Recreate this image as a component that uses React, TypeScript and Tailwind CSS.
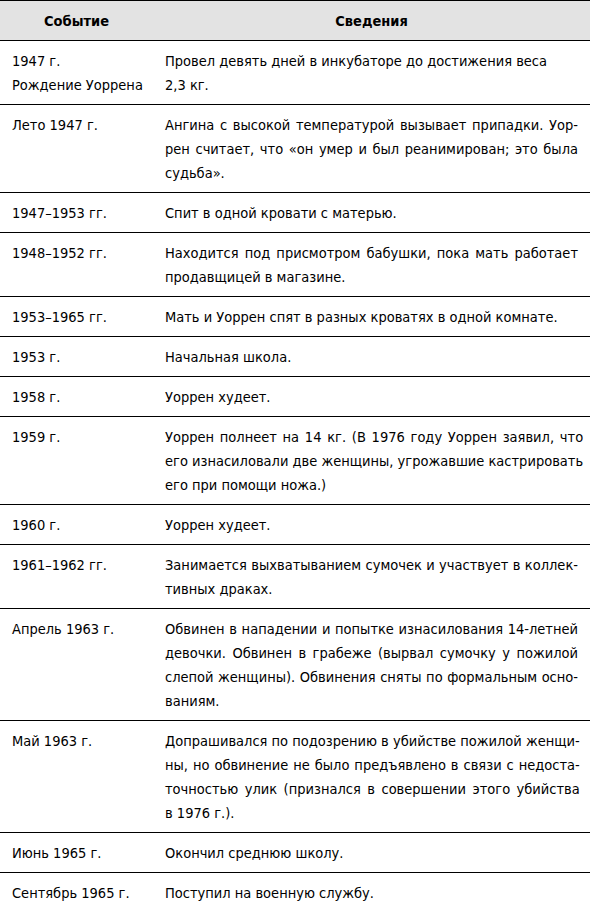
// Each info entry is split into the printed lines of the reference,
// every line but the last is justified to the full column width.
const rows: { event: string[]; info: string[]; ragged?: boolean }[] = [
  {
    event: ["1947 г.", "Рождение Уоррена"],
    info: ["Провел девять дней в инкубаторе до достижения веса", "2,3 кг."],
    ragged: true,
  },
  {
    event: ["Лето 1947 г."],
    info: [
      "Ангина с высокой температурой вызывает припадки. Уор-",
      "рен считает, что «он умер и был реанимирован; это была",
      "судьба».",
    ],
  },
  { event: ["1947–1953 гг."], info: ["Спит в одной кровати с матерью."] },
  {
    event: ["1948–1952 гг."],
    info: ["Находится под присмотром бабушки, пока мать работает", "продавщицей в магазине."],
  },
  { event: ["1953–1965 гг."], info: ["Мать и Уоррен спят в разных кроватях в одной комнате."] },
  { event: ["1953 г."], info: ["Начальная школа."] },
  { event: ["1958 г."], info: ["Уоррен худеет."] },
  {
    event: ["1959 г."],
    info: [
      "Уоррен полнеет на 14 кг. (В 1976 году Уоррен заявил, что",
      "его изнасиловали две женщины, угрожавшие кастрировать",
      "его при помощи ножа.)",
    ],
  },
  { event: ["1960 г."], info: ["Уоррен худеет."] },
  {
    event: ["1961–1962 гг."],
    info: ["Занимается выхватыванием сумочек и участвует в коллек-", "тивных драках."],
  },
  {
    event: ["Апрель 1963 г."],
    info: [
      "Обвинен в нападении и попытке изнасилования 14-летней",
      "девочки. Обвинен в грабеже (вырвал сумочку у пожилой",
      "слепой женщины). Обвинения сняты по формальным осно-",
      "ваниям.",
    ],
  },
  {
    event: ["Май 1963 г."],
    info: [
      "Допрашивался по подозрению в убийстве пожилой женщи-",
      "ны, но обвинение не было предъявлено в связи с недоста-",
      "точностью улик (признался в совершении этого убийства",
      "в 1976 г.).",
    ],
  },
  { event: ["Июнь 1965 г."], info: ["Окончил среднюю школу."] },
  { event: ["Сентябрь 1965 г."], info: ["Поступил на военную службу."] },
];

export default function App() {
  return (
    <div
      className="w-[590px] bg-white text-black text-[14.5px] leading-6"
      style={{ fontFamily: '"DejaVu Sans Condensed", "Liberation Sans", sans-serif' }}
    >
      <div className="border-t border-black">
        {/* Header */}
        <div className="grid grid-cols-[153px_1fr] bg-[#e3e3e3] border-b border-black h-10 items-center font-bold">
          <div className="text-center">Событие</div>
          <div className="text-center">Сведения</div>
        </div>

        {rows.map((row, i) => (
          <div key={i} className="grid grid-cols-[153px_1fr] border-b border-black pt-2 pb-[7px]">
            <div className="pl-3">
              {row.event.map((line, j) => (
                <div key={j}>{line}</div>
              ))}
            </div>
            <div className="pl-3 pr-3">
              {row.info.map((line, j) =>
                j < row.info.length - 1 && !row.ragged ? (
                  <div key={j} className="whitespace-nowrap text-justify [text-align-last:justify]">
                    {line}
                  </div>
                ) : (
                  <div key={j} className="whitespace-nowrap">
                    {line}
                  </div>
                )
              )}
            </div>
          </div>
        ))}
      </div>
    </div>
  );
}
